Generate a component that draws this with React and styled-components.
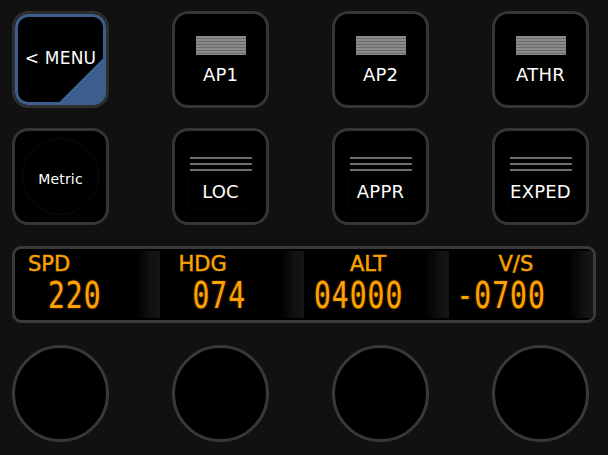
import React from 'react';
import styled, { createGlobalStyle, css } from 'styled-components';

const GlobalStyle = createGlobalStyle`
  html, body {
    margin: 0;
    padding: 0;
    background: #111111;
  }
  body {
    font-family: "DejaVu Sans", Verdana, sans-serif;
  }
`;

const Panel = styled.div`
  width: 608px;
  height: 455px;
  box-sizing: border-box;
  padding: 11px 12px 0 12px;
  background: #111111;
  display: flex;
  flex-direction: column;
`;

const ButtonRow = styled.div`
  display: grid;
  grid-template-columns: repeat(4, 97px);
  column-gap: 63px;
  margin-bottom: ${(p) => p.$gap || 0}px;
`;

const Key = styled.div`
  position: relative;
  width: 97px;
  height: 97px;
  box-sizing: border-box;
  border: 3px solid #353535;
  border-radius: 16px;
  background: #000;
  color: #fff;
  display: flex;
  flex-direction: column;
  align-items: center;
  justify-content: center;
  overflow: hidden;
  ${(p) =>
    p.$menu &&
    css`
      border-color: #2e2e2e;
      box-shadow: inset 0 0 0 3px #3c5f8d;
      background: linear-gradient(135deg, #000 0%, #000 72.5%, #3c5f8d 73%, #3c5f8d 100%);
    `}
`;

const KeyLabel = styled.span`
  font-size: ${(p) => p.$size || 18}px;
  line-height: 1;
  letter-spacing: 0.2px;
  margin-top: ${(p) => p.$top || 0}px;
  position: relative;
  z-index: 1;
`;

const SolidBar = styled.div`
  width: 50px;
  height: 19px;
  background: repeating-linear-gradient(
    180deg,
    #8a8a8a 0px,
    #8a8a8a 2px,
    #6c6c6c 2px,
    #6c6c6c 3px
  );
  margin-bottom: 11px;
`;

const LineStack = styled.div`
  width: 62px;
  display: flex;
  flex-direction: column;
  gap: 4px;
  margin: 4px 0 12px;
`;

const Line = styled.div`
  height: 2px;
  background: #6e6e6e;
`;

const InnerRing = styled.div`
  position: absolute;
  inset: 7px;
  border-radius: 50%;
  border: 1px solid #0c0c0c;
`;

const InnerFrame = styled.div`
  position: absolute;
  inset: 15px 12px 12px 12px;
  border-radius: 4px;
  border: 1px solid #060606;
`;

const Display = styled.div`
  height: 77px;
  box-sizing: border-box;
  border: 3px solid #3a3a3a;
  border-radius: 9px;
  background: #000;
  display: grid;
  grid-template-columns: repeat(4, 1fr);
  overflow: hidden;
  margin-bottom: 22px;
`;

const Cell = styled.div`
  position: relative;
  padding: 4px 0 0 ${(p) => p.$pad}px;
  color: #f7a100;
  &::after {
    content: '';
    position: absolute;
    top: 2px;
    bottom: 2px;
    right: 0;
    width: 24px;
    background: linear-gradient(90deg, #000 0%, #111 60%, #161616 100%);
  }
`;

const CellLabel = styled.div`
  font-family: "DejaVu Sans", Verdana, sans-serif;
  font-size: 21px;
  line-height: 22px;
  -webkit-text-stroke: 0.5px #f7a100;
  margin-left: ${(p) => p.$labelPad || 0}px;
  position: relative;
  z-index: 1;
`;

const Digits = styled.div`
  font-family: "DejaVu Sans Mono", "Liberation Mono", monospace;
  font-size: 28px;
  line-height: 28px;
  margin-top: 3px;
  margin-left: ${(p) => p.$digitPad || 0}px;
  letter-spacing: 1px;
  transform: scaleY(1.3);
  transform-origin: top left;
  color: #ffa200;
  text-shadow: 0 0 2px rgba(255, 140, 0, 0.5);
  position: relative;
  z-index: 1;
`;

const Knob = styled.div`
  width: 97px;
  height: 97px;
  box-sizing: border-box;
  border-radius: 50%;
  border: 3px solid #383838;
  background: #000;
`;

const topKeys = ['AP1', 'AP2', 'ATHR'];
const lowerKeys = ['LOC', 'APPR', 'EXPED'];

const readouts = [
  { label: 'SPD', value: '220', pad: 13, digitPad: 20 },
  { label: 'HDG', value: '074', pad: 19, digitPad: 14 },
  { label: 'ALT', value: '04000', pad: 10, labelPad: 36, digitPad: 0 },
  { label: 'V/S', value: '-0700', pad: 8, labelPad: 42, digitPad: 0 },
];

export default function App() {
  return (
    <>
      <GlobalStyle />
      <Panel>
        <ButtonRow $gap={20}>
          <Key $menu>
            <KeyLabel $size={17} $top={-3}>&lt; MENU</KeyLabel>
          </Key>
          {topKeys.map((k) => (
            <Key key={k}>
              <SolidBar />
              <KeyLabel>{k}</KeyLabel>
            </Key>
          ))}
        </ButtonRow>

        <ButtonRow $gap={21}>
          <Key>
            <InnerRing />
            <KeyLabel $size={14} $top={4}>Metric</KeyLabel>
          </Key>
          {lowerKeys.map((k) => (
            <Key key={k}>
              <InnerFrame />
              <LineStack>
                <Line />
                <Line />
                <Line />
              </LineStack>
              <KeyLabel>{k}</KeyLabel>
            </Key>
          ))}
        </ButtonRow>

        <Display>
          {readouts.map((r) => (
            <Cell key={r.label} $pad={r.pad}>
              <CellLabel $labelPad={r.labelPad}>{r.label}</CellLabel>
              <Digits $digitPad={r.digitPad}>{r.value}</Digits>
            </Cell>
          ))}
        </Display>

        <ButtonRow>
          <Knob />
          <Knob />
          <Knob />
          <Knob />
        </ButtonRow>
      </Panel>
    </>
  );
}
